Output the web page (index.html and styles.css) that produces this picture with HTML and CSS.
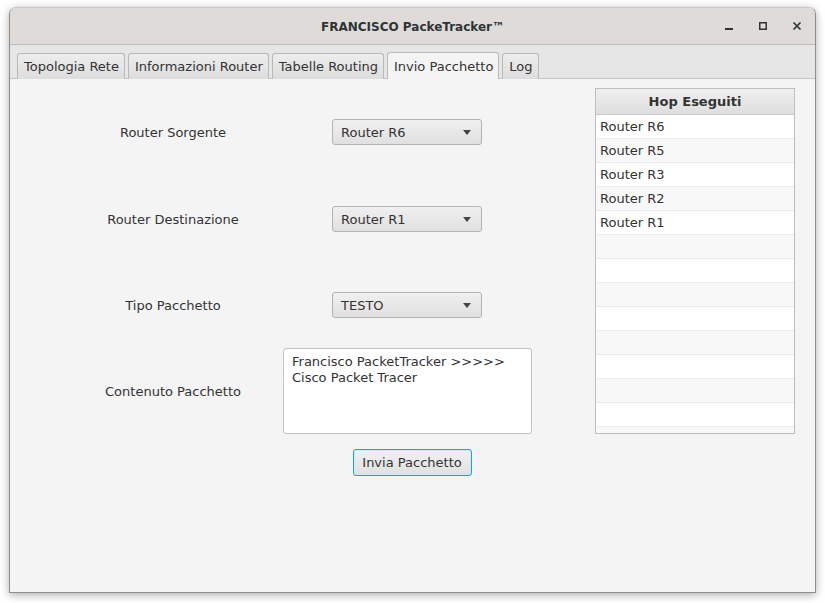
FILE: index.html
```html
<!DOCTYPE html>
<html lang="it">
<head>
<meta charset="utf-8">
<title>FRANCISCO PackeTracker™</title>
<link rel="stylesheet" href="styles.css">
</head>
<body>
<div class="window">
  <div class="titlebar">
    <div class="title">FRANCISCO PackeTracker™</div>
    <div class="controls">
      <svg class="ctl" width="12" height="12" viewBox="0 0 12 12"><rect x="2" y="8" width="8" height="2" fill="#2e3436"/></svg>
      <svg class="ctl" width="12" height="12" viewBox="0 0 12 12"><rect x="2.75" y="2.75" width="6.5" height="6.5" fill="none" stroke="#2e3436" stroke-width="1.5"/></svg>
      <svg class="ctl" width="12" height="12" viewBox="0 0 12 12"><path d="M2.5 2.5 L9.5 9.5 M9.5 2.5 L2.5 9.5" stroke="#2e3436" stroke-width="1.7"/></svg>
    </div>
  </div>
  <div class="tabbar">
    <div class="tab">Topologia Rete</div>
    <div class="tab">Informazioni Router</div>
    <div class="tab">Tabelle Routing</div>
    <div class="tab active">Invio Pacchetto</div>
    <div class="tab">Log</div>
  </div>
  <div class="content">
    <div class="form">
      <div class="label">Router Sorgente</div>
      <div class="combo"><span>Router R6</span><span class="arrow"></span></div>
      <div class="label">Router Destinazione</div>
      <div class="combo"><span>Router R1</span><span class="arrow"></span></div>
      <div class="label">Tipo Pacchetto</div>
      <div class="combo"><span>TESTO</span><span class="arrow"></span></div>
      <div class="label">Contenuto Pacchetto</div>
      <div class="textarea">Francisco PacketTracker &gt;&gt;&gt;&gt;&gt;<br>Cisco Packet Tracer</div>
      <div class="btn-cell"><div class="button">Invia Pacchetto</div></div>
    </div>
    <div class="table">
      <div class="thead">Hop Eseguiti</div>
      <div class="row">Router R6</div>
      <div class="row odd">Router R5</div>
      <div class="row">Router R3</div>
      <div class="row odd">Router R2</div>
      <div class="row">Router R1</div>
      <div class="row odd"></div>
      <div class="row"></div>
      <div class="row odd"></div>
      <div class="row"></div>
      <div class="row odd"></div>
      <div class="row"></div>
      <div class="row odd"></div>
      <div class="row"></div>
      <div class="row odd"></div>
    </div>
  </div>
</div>
</body>
</html>
```
FILE: styles.css
```css
* { box-sizing: border-box; }
html, body { margin: 0; padding: 0; }
body {
  background: #ffffff;
  width: 825px;
  height: 603px;
  overflow: hidden;
  padding: 7px 9px 0 9px;
  font-family: "DejaVu Sans", sans-serif;
  font-size: 13px;
  color: #333333;
}
.window {
  width: 807px;
  height: 586px;
  border: 1px solid #8e8e8e;
  border-top-color: #c8c6c3;
  border-radius: 7px 7px 0 0;
  box-shadow: 0 2px 9px rgba(0,0,0,0.32);
  background: #f4f4f4;
  overflow: hidden;
  display: flex;
  flex-direction: column;
}
.titlebar {
  height: 37px;
  background: #dedbd8;
  border-bottom: 1px solid #bfbcb8;
  display: flex;
  align-items: center;
  justify-content: center;
  position: relative;
  flex: none;
}
.title {
  font-weight: bold;
  font-size: 12px;
  color: #2e3436;
  padding-top: 1px;
}
.controls {
  position: absolute;
  right: 12px;
  top: 12px;
  display: flex;
  gap: 22px;
}
.ctl { display: block; }
.tabbar {
  height: 34px;
  flex: none;
  background: #e6e6e6;
  border-bottom: 1px solid #c6c6c6;
  display: flex;
  align-items: flex-end;
  padding-left: 7px;
  gap: 3px;
}
.tab {
  height: 26px;
  margin-bottom: -1px;
  padding: 0 5px 0 6px;
  display: flex;
  align-items: center;
  border: 1px solid #b9b9b9;
  border-bottom: none;
  border-radius: 3px 3px 0 0;
  background: linear-gradient(#ededed, #dddddd);
  color: #333;
  white-space: nowrap;
}
.tab.active {
  background: #f4f4f4;
  height: 27px;
  position: relative;
}
.content {
  flex: 1;
  display: flex;
  align-items: flex-start;
  padding-top: 9px;
  padding-left: 53px;
}
.form {
  display: grid;
  grid-template-columns: 220px 248px;
  grid-template-rows: 87px 87px 85px 86px auto;
  align-items: center;
}
.label {
  justify-self: center;
  padding-top: 2px;
  color: #333;
}
.combo {
  justify-self: center;
  width: 150px;
  height: 26px;
  border: 1px solid #b3b3b3;
  border-radius: 3px;
  background: linear-gradient(#f0f0f0, #e0e0e0);
  display: flex;
  align-items: center;
  justify-content: space-between;
  padding: 1px 10px 0 8px;
  color: #333;
}
.arrow {
  width: 0;
  height: 0;
  border-left: 4px solid transparent;
  border-right: 4px solid transparent;
  border-top: 5px solid #444;
}
.textarea {
  grid-column: 2;
  width: 249px;
  height: 86px;
  margin-top: 2px;
  background: #ffffff;
  border: 1px solid #c2c2c2;
  border-radius: 3px;
  padding: 5px 8px;
  line-height: 16px;
  color: #333;
}
.btn-cell {
  grid-column: 2;
  display: flex;
  justify-content: center;
  padding-left: 10px;
  padding-top: 16px;
}
.button {
  width: 119px;
  height: 27px;
  border: 1px solid #1fa3d6;
  border-radius: 3px;
  box-shadow: inset 0 0 0 1px #cdeaf6;
  background: linear-gradient(#f2f2f2, #e0e0e0);
  display: flex;
  align-items: center;
  justify-content: center;
  color: #333;
}
.table {
  margin-left: 64px;
  width: 200px;
  height: 346px;
  border: 1px solid #bdbdbd;
  background: #ffffff;
  overflow: hidden;
}
.thead {
  height: 26px;
  border-bottom: 1px solid #c8c8c8;
  background: linear-gradient(#f0f0f0, #dedede);
  display: flex;
  align-items: center;
  justify-content: center;
  font-weight: bold;
  color: #333;
}
.row {
  height: 24px;
  border-bottom: 1px solid #ececec;
  padding-left: 4px;
  display: flex;
  align-items: center;
  background: #ffffff;
  flex: none;
}
.row.odd { background: #f8f8f8; }
```
